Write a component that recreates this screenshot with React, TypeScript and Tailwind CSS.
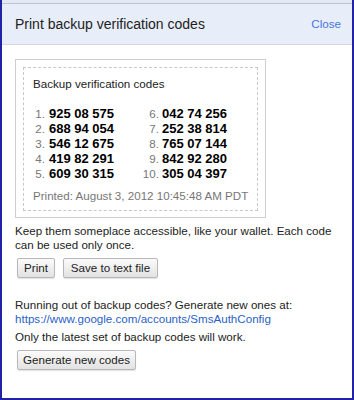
const codes = [
  ["925 08 575", "042 74 256"],
  ["688 94 054", "252 38 814"],
  ["546 12 675", "765 07 144"],
  ["419 82 291", "842 92 280"],
  ["609 30 315", "305 04 397"],
];

const btn =
  "h-[20px] rounded-[2px] border border-[#b8b8b8] bg-gradient-to-b from-[#fbfbfb] to-[#e2e2e2] text-[11.6px] text-[#222] shadow-[0_1px_1px_rgba(0,0,0,0.12)] flex items-center justify-center";

export default function App() {
  return (
    <div
      className="w-[354px] h-[400px] bg-white border-x-2 border-b-2 border-[#2222a8] flex flex-col overflow-hidden"
      style={{ fontFamily: '"Liberation Sans", Arial, sans-serif' }}
    >
      <div className="h-[4px] bg-[#e3e8f3] border-b border-[#bcc3d2] shrink-0" />
      {/* header */}
      <div className="h-[41px] bg-[#e8eef9] border-b border-[#d2d6de] flex items-center justify-between pl-[13px] pr-[11px] shrink-0">
        <span className="text-[14px] text-[#222]">Print backup verification codes</span>
        <span className="text-[11.6px] text-[#4577dc]">Close</span>
      </div>

      <div className="pl-[13px] pr-[12px] pt-[14px] text-[11.6px] leading-[14px] text-[#222]">
        {/* codes box */}
        <div className="w-[251px] border border-[#cfcfcf] p-[7px] pb-[6px]">
          <div className="border border-dashed border-[#c8c8c8] px-[9px] pt-[9px] pb-[7px]">
            <div className="text-[#222]">Backup verification codes</div>
            <div className="flex mt-[15px]">
              <div className="w-[109px]">
                {codes.map((c, i) => (
                  <div key={i} className="h-[15px] flex items-center">
                    <span className="w-[12px] text-right text-[#777]">{i + 1}.</span>
                    <span className="ml-[4px] text-[13px] font-bold text-black">{c[0]}</span>
                  </div>
                ))}
              </div>
              <div>
                {codes.map((c, i) => (
                  <div key={i} className="h-[15px] flex items-center">
                    <span className="w-[17px] text-right text-[#777]">{i + 6}.</span>
                    <span className="ml-[3px] text-[13px] font-bold text-black">{c[1]}</span>
                  </div>
                ))}
              </div>
            </div>
            <div className="mt-[8px] text-[#777] whitespace-nowrap">
              Printed: August 3, 2012 10:45:48 AM PDT
            </div>
          </div>
        </div>

        <p className="mt-[6px]">
          Keep them someplace accessible, like your wallet. Each code can be used only once.
        </p>
        <div className="flex gap-[8px] mt-[6px] ml-[2px]">
          <button className={`${btn} w-[38px]`}>Print</button>
          <button className={`${btn} w-[95px]`}>Save to text file</button>
        </div>

        <p className="mt-[20px]">Running out of backup codes? Generate new ones at:</p>
        <p className="text-[#2a5fc8]">https://www.google.com/accounts/SmsAuthConfig</p>
        <p className="mt-[4px]">Only the latest set of backup codes will work.</p>
        <div className="mt-[6px] ml-[2px]">
          <button className={`${btn} w-[119px]`}>Generate new codes</button>
        </div>
      </div>
    </div>
  );
}
